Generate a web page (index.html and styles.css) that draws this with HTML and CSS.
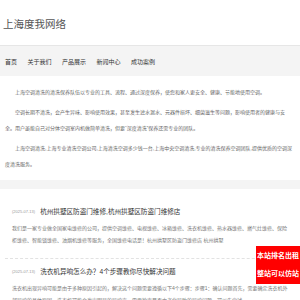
FILE: index.html
```html
<!DOCTYPE html>
<html lang="zh-CN">
<head>
    <meta charset="UTF-8">
    <meta name="viewport" content="width=device-width, initial-scale=1.0">
    <title>上海度我网络</title>
    <link rel="stylesheet" href="styles.css">
</head>
<body>
    <div id="header">
        <h1 class="logo">上海度我网络</h1>
    </div>
    <div id="nav">
        <a href="#">首页</a>
        <a href="#">关于我们</a>
        <a href="#">产品展示</a>
        <a href="#">新闻中心</a>
        <a href="#">成功案例</a>
    </div>
    <div id="intro">
        <p>上海空调清洗的清洗保养队伍以专业的工具、流程、通过深度保养，使您和家人更安全、健康、节能地使用空调。</p>
        <p>空调长期不清洗，会产生异味、影响使用效果，甚至发生滤水漏水、元器件损坏、细菌滋生等问题，影响使用者的健康与安全。用户虽能自己对分体空调室内机做简单清洗，但要“深度清洗”保养还需专业的团队。</p>
        <p>上海空调清洗,上海专业清洗空调公司,上海清洗空调多少钱一台,上海中央空调清洗,专业的清洗保养空调团队,提供优质的空调深度清洗服务。</p>
    </div>
    <div id="news">
        <div class="item">
            <div class="item-head">
                <span class="date">(2025-07-13)</span>
                <a class="item-title" href="#">杭州拱墅区防盗门维修,杭州拱墅区防盗门维修店</a>
            </div>
            <p class="item-desc">我们是一家专业做全国家电维修的公司，提供空调维修、电视维修、冰箱维修、洗衣机维修、热水器维修、燃气灶维修、保险柜维修、智能锁维修、油烟机维修等服务，全国维修电话是！杭州拱墅区防盗门维修店 杭州拱墅</p>
        </div>
        <div class="item">
            <div class="item-head">
                <span class="date">(2025-07-13)</span>
                <a class="item-title" href="#">洗衣机异响怎么办？4个步骤教你尽快解决问题</a>
            </div>
            <p class="item-desc">洗衣机出现异响可能是由于多种原因引起的，解决这个问题需要遵循以下4个步骤：步骤1：确认问题首先，需要确定洗衣机外部异响的具体原因，洗衣机可能会发出明显的异响声，需要检查是否由老化导致的异响问题，可以先尝试</p>
        </div>
    </div>
    <div id="ad">
        本站排名出租<br>整站可以仿站
    </div>
</body>
</html>
```

FILE: styles.css
```css
body {
    margin: 0;
    background-color: #f4f4f4;
    font-family: "Liberation Sans", "Noto Sans CJK SC", sans-serif;
    color: #666;
}
a {
    text-decoration: none;
}
#header {
    background-color: #fff;
    height: 45px;
    display: flex;
    align-items: center;
    padding: 0 3px;
}
.logo {
    margin: 2px 0 0;
    font-size: 10.5px;
    font-weight: normal;
    color: #555;
}
#nav {
    height: 30px;
    border-top: 1px solid #e6e6e6;
    display: flex;
    align-items: center;
    gap: 10.5px;
    padding-left: 5px;
}
#nav a {
    font-size: 6px;
    color: #333;
}
#intro {
    background-color: #fff;
    padding: 8px 7px 8px 5px;
}
#intro p {
    margin: 0 0 4px;
    font-size: 5px;
    line-height: 16px;
    text-indent: 10px;
}
#intro p:last-child {
    margin-bottom: 0;
}
#news {
    background-color: #fff;
    margin-top: 9px;
    padding: 10px 5px 0;
}
.item {
    padding: 6px 7px 12px;
    border-bottom: 1px dashed #e2e2e2;
}
.item-head {
    display: flex;
    align-items: center;
    gap: 5px;
    height: 12px;
}
.date {
    font-size: 4px;
    color: #999;
}
.item-title {
    font-size: 6.6px;
    color: #333;
}
.item-desc {
    margin: 5px 0 0;
    font-size: 5px;
    line-height: 12px;
    color: #777;
}
#ad {
    position: fixed;
    right: 0;
    top: 246px;
    width: 44px;
    background-color: #ff0000;
    color: #fff;
    font-size: 7px;
    font-weight: bold;
    line-height: 18px;
    text-align: center;
    padding: 1px 0;
}
```
